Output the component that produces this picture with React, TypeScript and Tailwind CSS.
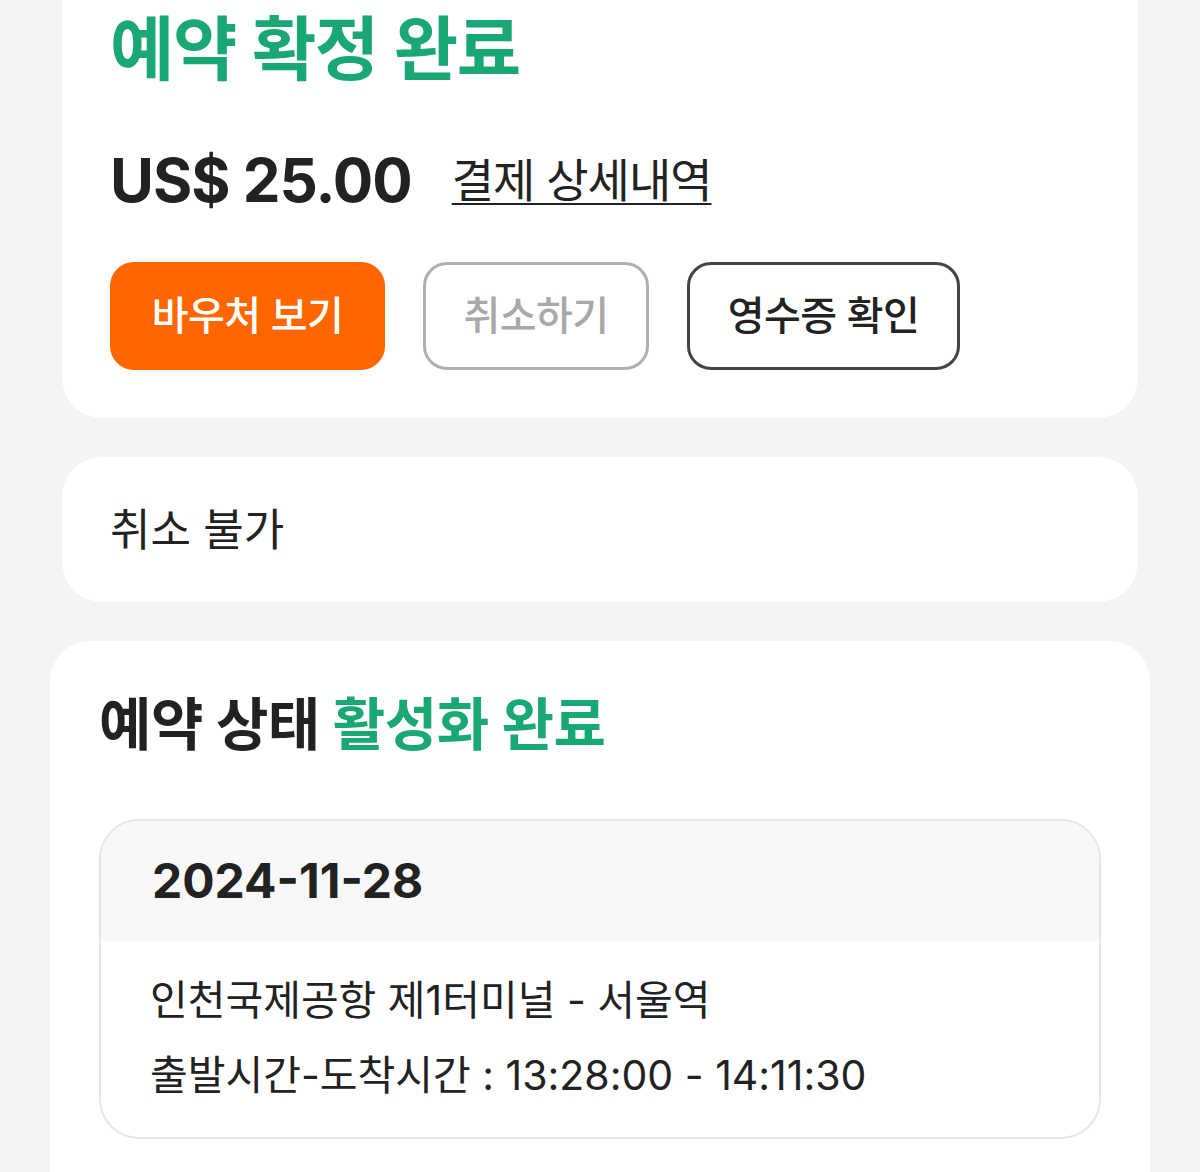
export default function App() {
  const font = { fontFamily: "Inter, 'Noto Sans CJK KR', sans-serif" };
  return (
    <div className="min-h-[1172px] w-[1200px] overflow-hidden bg-[#f4f4f4] text-[#222]" style={font}>
      {/* booking summary card */}
      <div className="mx-[62px] rounded-b-[40px] bg-white px-12 pt-[8px] pb-[48px]">
        <h1 className="text-[70px] leading-[84px] font-semibold tracking-[-1.5px] text-[#19a874]">예약 확정 완료</h1>
        <div className="mt-[52px] flex h-[72px] items-center gap-[40px]">
          <span className="text-[60px] font-bold tracking-[-1px]">US$ 25.00</span>
          <a className="text-[46px] tracking-[-1px] underline decoration-2 underline-offset-[6px]">결제 상세내역</a>
        </div>
        <div className="mt-[46px] flex gap-[38px]">
          <button className="h-[108px] w-[275px] rounded-[24px] bg-[#ff6600] text-[40px] font-medium tracking-[-0.5px] text-white">바우처 보기</button>
          <button className="h-[108px] w-[226px] rounded-[24px] border-[3px] border-[#b0b0b0] text-[40px] font-medium tracking-[-0.5px] text-[#a8a8a8]">취소하기</button>
          <button className="h-[108px] w-[273px] rounded-[24px] border-[3px] border-[#444] text-[40px] font-medium tracking-[-0.5px] text-[#222]">영수증 확인</button>
        </div>
      </div>

      {/* cancel policy */}
      <div className="mx-[62px] mt-[39px] flex h-[145px] items-center rounded-[40px] bg-white px-12">
        <span className="text-[44px]">취소 불가</span>
      </div>

      {/* status */}
      <div className="mx-[50px] mt-[39px] rounded-t-[40px] bg-white px-[49px] pt-[48px] pb-[40px]">
        <h2 className="text-[57px] leading-[72px] font-bold tracking-[-0.5px]">
          예약 상태 <span className="text-[#19a874]">활성화 완료</span>
        </h2>
        <div className="mt-[58px] overflow-hidden rounded-[40px] border-2 border-[#e6e6e6]">
          <div className="flex h-[120px] items-center bg-[#f8f8f8] px-[51px]">
            <span className="text-[48px] font-bold">2024-11-28</span>
          </div>
          <div className="px-[49px] pt-[22px] pb-[24px] text-[41px] leading-[75px]">
            <p>인천국제공항 제1터미널 - 서울역</p>
            <p>출발시간-도착시간 : 13:28:00 - 14:11:30</p>
          </div>
        </div>
      </div>
    </div>
  );
}
